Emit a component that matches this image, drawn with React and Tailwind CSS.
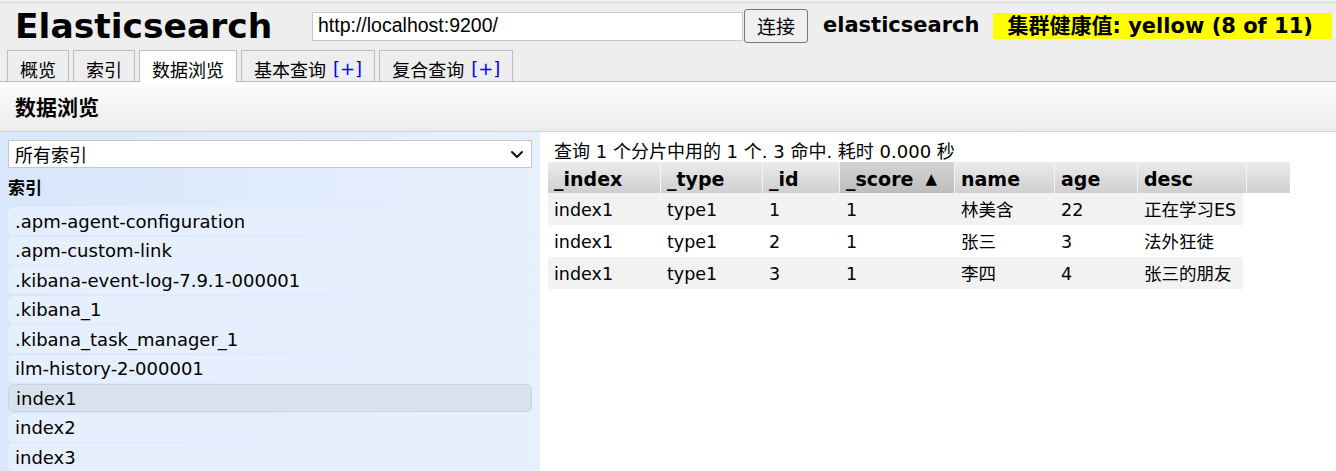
import React from "react";

const indices = [
  ".apm-agent-configuration",
  ".apm-custom-link",
  ".kibana-event-log-7.9.1-000001",
  ".kibana_1",
  ".kibana_task_manager_1",
  "ilm-history-2-000001",
  "index1",
  "index2",
  "index3",
];

const cols = [
  { n: "_index", w: "w-[113px]" },
  { n: "_type", w: "w-[102px]" },
  { n: "_id", w: "w-[77px]" },
  { n: "_score", w: "w-[115px]", sorted: true },
  { n: "name", w: "w-[100px]" },
  { n: "age", w: "w-[83px]" },
  { n: "desc", w: "w-[109px]" },
];

const rows = [
  ["index1", "type1", "1", "1", "林美含", "22", "正在学习ES"],
  ["index1", "type1", "2", "1", "张三", "3", "法外狂徒"],
  ["index1", "type1", "3", "1", "李四", "4", "张三的朋友"],
];

const font = "font-['DejaVu_Sans','Noto_Sans_CJK_SC',sans-serif]";

export default function App() {
  return (
    <div className={`w-[1336px] h-[471px] overflow-hidden bg-white text-black ${font}`}>
      {/* Top header */}
      <div className="bg-[#eee] pt-[2px]">
        <div className="border-t border-[#d9d9d9]">
          <div className="flex items-center h-[46px]">
            <div className="ml-[15px] w-[297px] text-[34.5px] font-bold leading-none">Elasticsearch</div>
            <div className="w-[431px] h-[29px] bg-white border border-[#c8c8c8] flex items-center pl-[5px] font-['Liberation_Sans','Noto_Sans_CJK_SC',sans-serif] text-[19.5px]">
              http://localhost:9200/
            </div>
            <div className="ml-[1px] w-[64px] h-[34px] bg-[#efefef] border border-[#767676] rounded-[3px] flex items-center justify-center text-[19px] font-['Noto_Sans_CJK_SC',sans-serif]">
              连接
            </div>
            <div className="ml-[15px] text-[21px] font-bold">elasticsearch</div>
            <div className="ml-[14px] w-[339px] h-[26px] bg-[#ffff00] flex items-center pl-[14px] text-[21px] font-bold leading-none">
              集群健康值: yellow (8 of 11)
            </div>
          </div>
          <div className="flex items-end gap-[4px] pl-[7px] h-[33px] border-b border-[#bdbdbd]">
            {[
              ["概览", false, false],
              ["索引", false, false],
              ["数据浏览", true, false],
              ["基本查询", false, true],
              ["复合查询", false, true],
            ].map(([t, active, plus]) => (
              <div
                key={t}
                className={`h-[31px] px-[12px] pt-[6px] border border-b-0 border-[#bdbdbd] flex items-center text-[18px] leading-none font-['Noto_Sans_CJK_SC',sans-serif] ${
                  active ? "bg-white -mb-px h-[32px] pb-px" : "bg-[#eee]"
                }`}
              >
                {t}
                {plus && <span className="ml-[7px] text-[#0000ff] font-['DejaVu_Sans',sans-serif] text-[18px]">[+]</span>}
              </div>
            ))}
          </div>
        </div>
      </div>

      {/* Section header */}
      <div className="h-[50px] bg-gradient-to-b from-[#fdfdfd] to-[#ececec] border-b border-[#cfd3d8] flex items-center pl-[15px] text-[21px] font-bold font-['Noto_Sans_CJK_SC',sans-serif]">
        数据浏览
      </div>

      {/* Main */}
      <div className="flex">
        <div className="w-[540px] h-[340px] bg-gradient-to-r from-[#d9e6fb] to-[#e7f0fd] px-[8px] pt-[8px]">
          <div className="h-[28px] bg-white border border-[#c6c6c6] flex items-center justify-between pl-[6px] pr-[6px] text-[18px] font-['Noto_Sans_CJK_SC',sans-serif]">
            <span>所有索引</span>
            <svg width="16" height="16" viewBox="0 0 16 16" fill="none" stroke="#111" strokeWidth="2" strokeLinecap="round" strokeLinejoin="round">
              <path d="M3 6l5 5 5-5" />
            </svg>
          </div>
          <div className="mt-[6px] h-[24px] text-[17px] font-bold font-['Noto_Sans_CJK_SC',sans-serif] leading-none flex items-center">索引</div>
          <div className="mt-[9px] flex flex-col gap-[1.5px]">
            {indices.map((n) => (
              <div
                key={n}
                className={`h-[28px] rounded-[6px] flex items-center pl-[7px] text-[18px] ${
                  n === "index1" ? "bg-[#d8e2ee] border border-[#c9d3df] pl-[6px]" : "bg-[#e6effd]"
                }`}
              >
                {n}
              </div>
            ))}
          </div>
        </div>

        <div className="pl-[8px] pt-[8px]">
          <div className="h-[22px] flex items-center pl-[6px] text-[18px] whitespace-nowrap">
            查询 1 个分片中用的 1 个. 3 命中. 耗时 0.000 秒
          </div>
          <div className="flex h-[31px]">
            {cols.map((c) => (
              <div
                key={c.n}
                className={`${c.w} flex items-center pl-[6px] pt-[3px] text-[19px] font-bold border-r border-[#f4f4f4] ${
                  c.sorted ? "bg-gradient-to-b from-[#d4d4d4] to-[#bdbdbd]" : "bg-gradient-to-b from-[#ececec] to-[#cfcfcf]"
                }`}
              >
                {c.n}
                {c.sorted && <span className="ml-[12px] text-[15px]">▲</span>}
              </div>
            ))}
            <div className="w-[43px] bg-gradient-to-b from-[#ececec] to-[#cfcfcf]"></div>
          </div>
          {rows.map((r, i) => (
            <div key={i} className={`flex h-[32px] w-[695px] ${i % 2 === 0 ? "bg-[#f2f2f2]" : "bg-white"}`}>
              {r.map((v, j) => (
                <div key={j} className={`${cols[j].w} shrink-0 flex items-center pl-[6px] pt-[3px] text-[17.5px]`}>
                  {v}
                </div>
              ))}
            </div>
          ))}
        </div>
      </div>
    </div>
  );
}
